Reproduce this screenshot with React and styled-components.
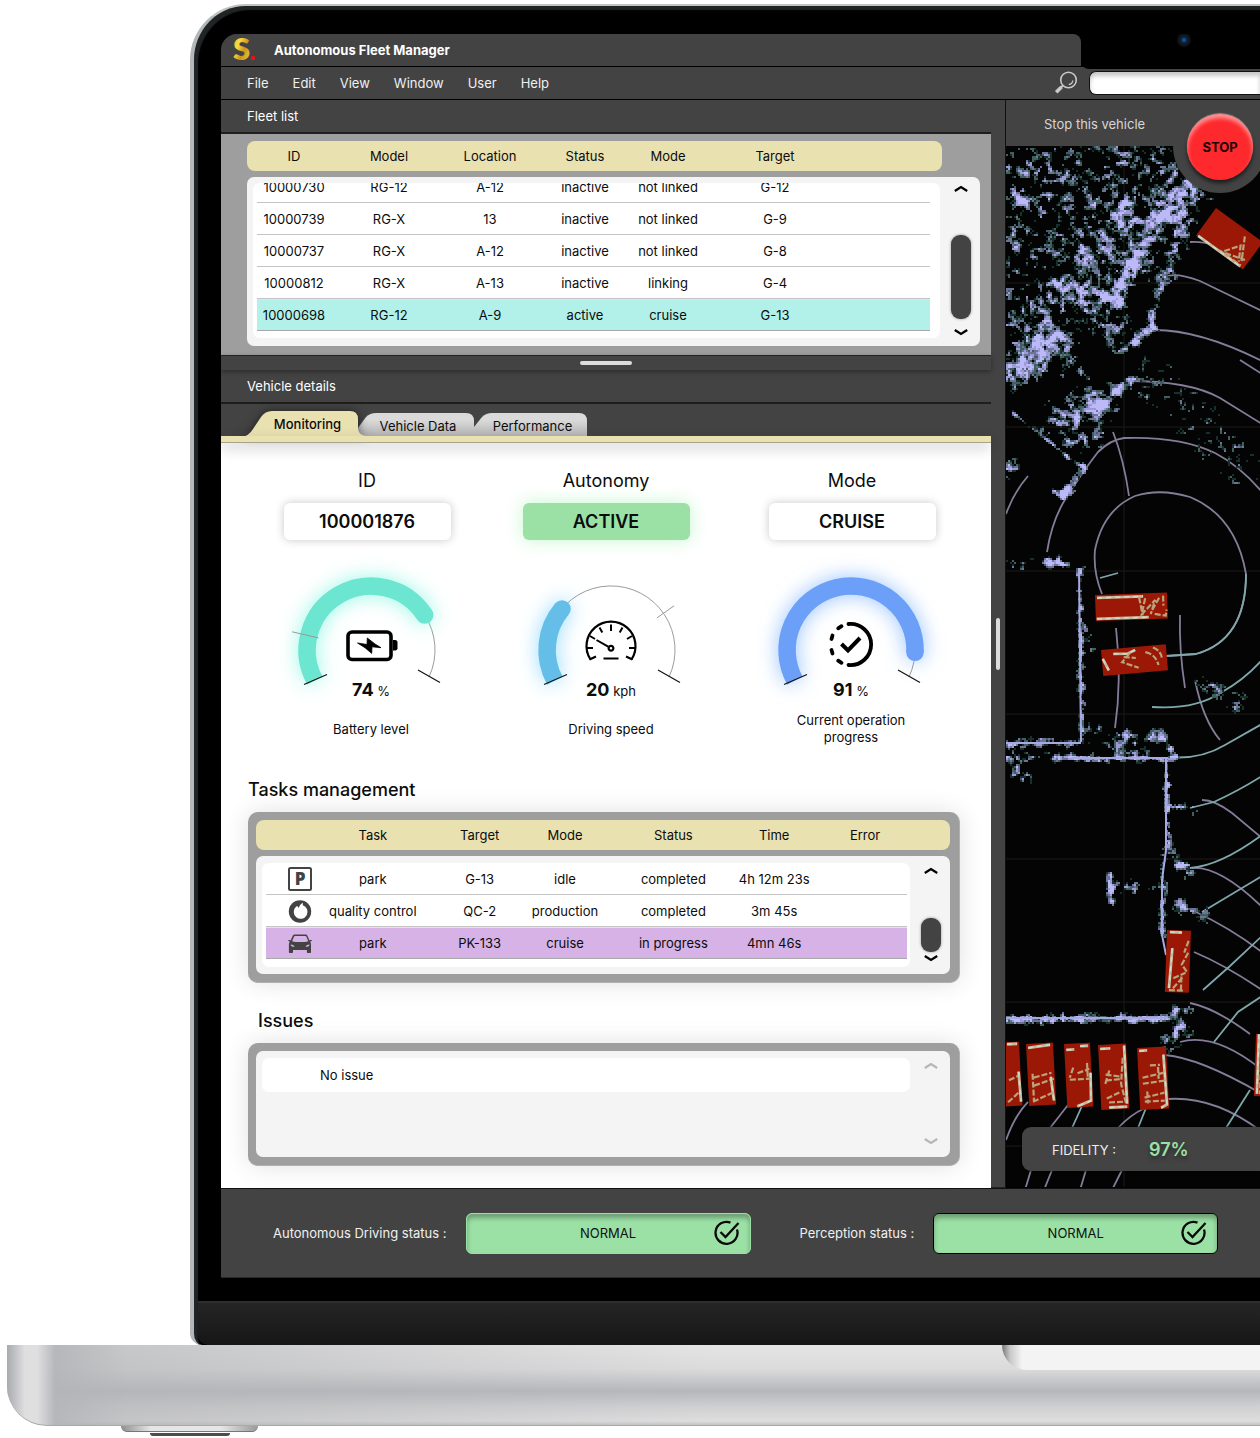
import React from "react";
import styled, { createGlobalStyle, css } from "styled-components";

const color = {
  chrome: "#434343",
  panel: "#9e9e9e",
  sand: "#e9e1b0",
  well: "#f4f4f4",
  green: "#9be1a5",
};

const GlobalStyle = createGlobalStyle`
  * { box-sizing: border-box; }
  body {
    margin: 0;
    background: #fff;
    color: #0c0c0c;
    font: 400 13px/16px Inter, "Liberation Sans", sans-serif;
    overflow-x: hidden;
  }
  button, input { font: inherit; color: inherit; padding: 0; border: 0; background: none; }
  h1, h2, p { margin: 0; font: inherit; }
`;

/* ---------- laptop ---------- */

const Laptop = styled.div`
  padding-top: 4px;
  overflow: hidden;
`;

const Lid = styled.div`
  margin-left: 190px;
  padding: 28px 0 0 27px;
  background: #000;
  border-left: 4px solid #b4b7ba;
  border-top: 2px solid #bfc4c1;
  border-radius: 56px 0 0 12px;
  box-shadow: inset 4px 4px 1px #212424;
`;

const Screen = styled.div`
  border-top-left-radius: 16px;
  overflow: hidden;
  background: ${color.chrome};
`;

const Chin = styled.div`
  height: 44px;
  margin: 23px 0 0 -23px;
  background: linear-gradient(#252525, #161616);
  border-top: 2px solid #2e2e2e;
  border-bottom-left-radius: 10px;
`;

const Base = styled.div`
  display: flex;
  justify-content: flex-end;
  height: 81px;
  margin-left: 7px;
  border-bottom-left-radius: 40px;
  border-bottom: 1px solid #a9a9ab;
  background:
    linear-gradient(90deg, #a9aaad 0, #dfdfe0 18px, #dfdfe0 30px, rgba(180, 181, 184, 0.95) 48px, rgba(180, 181, 184, 0.6) 120px, transparent 700px),
    linear-gradient(#e4e4e4 0, #dbdbdc 24px, #b6b7ba 46px, #d0d0d2 62px, #dedede 76px, #bcbcbe 81px);
`;

const ThumbNotch = styled.div`
  width: 258px;
  height: 25px;
  border-bottom-left-radius: 26px;
  background: linear-gradient(90deg, #777 0, #c8c8c8 8px, #f3f3f3 20px);
`;

const Foot = styled.div`
  width: 137px;
  height: 6px;
  margin-left: 121px;
  border-radius: 0 0 6px 6px;
  background: linear-gradient(90deg, #8f8f8f, #e6e6e6 30px, #e6e6e6 100px, #999);
  border-bottom: 1px solid #777;
`;

const FootPad = styled.div`
  width: 80px;
  height: 3px;
  margin: 1px 0 0 150px;
  border-radius: 0 0 40px 40px;
  background: #4a4d4a;
`;

/* ---------- window chrome ---------- */

const TitleBar = styled.header`
  display: flex;
  height: 33px;
  background: #000;
`;

const TitleArea = styled.div`
  flex: 1;
  display: flex;
  align-items: center;
  gap: 15px;
  padding-left: 11px;
  background: ${color.chrome};
  border-bottom: 1px solid #000;
  border-top-right-radius: 8px;
`;

const AppTitle = styled.h1`
  font-weight: 700;
  color: #fff;
`;

const CameraNotch = styled.div`
  position: relative;
  width: 179px;
  height: 35px;
  background: #000;
  border-bottom-left-radius: 8px;
  display: flex;
  justify-content: center;
`;

const Camera = styled.span`
  width: 14px;
  height: 14px;
  margin: -1px 0 0 26px;
  border-radius: 50%;
  background: radial-gradient(circle, #1c63a8 0, #0a2344 3px, #101418 5px, #0f1112 7px);
`;

const MenuBar = styled.div`
  display: flex;
  align-items: center;
  height: 33px;
  padding-left: 26px;
  border-bottom: 1px solid #000;
  color: #f0f0f0;
`;

const Menu = styled.nav`
  display: flex;
  flex: 1;
  gap: 24px;
`;

const MenuButton = styled.button`
  cursor: pointer;
`;

const Search = styled.label`
  display: flex;
  align-items: center;
  gap: 11px;
  width: 206px;
`;

const SearchInput = styled.input`
  flex: 1;
  min-width: 0;
  height: 24px;
  padding: 0 8px;
  color: #111;
  background: #fff;
  border: 1px solid #111;
  border-right: 0;
  border-radius: 7px 0 0 7px;
  box-shadow: inset 0 4px 4px rgba(0, 0, 0, 0.22);
`;

const Workspace = styled.main`
  display: grid;
  grid-template-columns: minmax(0, 770fr) 15px minmax(0, 254fr);
`;

const LeftPane = styled.div`
  background: #fff;
`;

const SectionBar = styled.h2`
  display: flex;
  align-items: center;
  height: 34px;
  padding-left: 26px;
  background: ${color.chrome};
  color: #fff;
  border-bottom: 2px solid #1e1e1e;
`;

const RowSplitter = styled.div`
  display: flex;
  align-items: center;
  justify-content: center;
  height: 15px;
  background: ${color.chrome};
  border-top: 1px solid #222;
  box-shadow: 0 2px 5px rgba(0, 0, 0, 0.35);
  position: relative;
`;

const ColumnSplitter = styled.div`
  display: flex;
  align-items: center;
  justify-content: center;
  background: ${color.chrome};
  border-right: 1px solid #111;
  border-bottom: 1px solid #222;
`;

const Grip = styled.span`
  width: ${(p) => (p.$vertical ? 4 : 52)}px;
  height: ${(p) => (p.$vertical ? 52 : 4)}px;
  border-radius: 2px;
  background: #dcdcdc;
`;

/* ---------- tables ---------- */

const FleetArea = styled.section`
  padding: 7px 11px 9px 26px;
  background: ${color.panel};
`;

const Panel = styled.section`
  margin-top: 10px;
  padding: 8px 9px 8px 8px;
  border: 1px solid #b0b0b0;
  border-width: 0 1px 1px 0;
  border-radius: 10px;
  background: ${color.panel};
  box-shadow: 0 0 24px rgba(0, 0, 0, 0.12);
`;

const TableFrame = styled.div`
  display: grid;
  grid-template-columns: minmax(0, 1fr) 38px;
  grid-template-rows: ${(p) => (p.$headless ? "auto" : "30px auto")};
  row-gap: 6px;
`;

const Table = styled.table`
  display: contents;
`;

const Head = styled.thead`
  display: block;
  grid-row: 1;
  grid-column: ${(p) => (p.$wide ? "1 / 3" : "1")};
  padding: 0 ${(p) => (p.$wide ? 43 : 12)}px 0 10px;
  border-radius: 8px;
  background: ${color.sand};
`;

const Well = styled.div`
  grid-row: ${(p) => (p.$headless ? 1 : 2)};
  grid-column: 1 / 3;
  border-radius: 7px;
  background: ${color.well};
`;

const Body = styled.tbody`
  display: block;
  grid-row: 2;
  grid-column: 1;
  margin: ${(p) => (p.$wide ? "7px 2px 7px 6px" : "6px 2px 8px 6px")};
  padding: ${(p) => (p.$wide ? "0 3px 8px 4px" : "0 10px 7px 4px")};
  overflow: hidden;
  border-radius: 7px;
  background: #fff;
`;

const Row = styled.tr`
  display: grid;
  grid-template-columns: ${(p) => p.$cols.map((c) => `minmax(0, ${c}fr)`).join(" ")};
  height: ${(p) => (p.$head ? 30 : 32)}px;
  ${(p) =>
    !p.$head &&
    css`
      border-bottom: 1px solid #c4c4c4;
    `}
  ${(p) =>
    p.$scrolled &&
    css`
      margin-top: -12px;
    `}
  ${(p) =>
    p.$tint &&
    css`
      background: ${p.$tint};
      background-clip: padding-box;
      border-top: 1px solid #e4e4e4;
      border-bottom-color: #a8a8a8;
    `}
`;

const cell = css`
  display: flex;
  align-items: center;
  justify-content: center;
  padding: 0;
  font-weight: 400;
  white-space: nowrap;
`;
const Th = styled.th`
  ${cell}
`;
const Td = styled.td`
  ${cell}
`;
const IconTd = styled.td`
  ${cell}
  justify-content: flex-start;
  padding-left: 22px;
  svg {
    flex: none;
  }
`;

const ScrollColumn = styled.div`
  grid-row: ${(p) => (p.$headless ? 1 : 2)};
  grid-column: 2;
  display: flex;
  flex-direction: column;
  align-items: center;
  padding: ${(p) => (p.$inset ? "11px 0 12px" : "8px 0 10px")};
`;

const ScrollButton = styled.button`
  display: flex;
  cursor: pointer;
  color: #000;
  &:disabled {
    color: #b7b7b7;
    cursor: default;
  }
`;

const Track = styled.div`
  flex: 1;
  display: flex;
  align-items: flex-end;
  padding-bottom: ${(p) => (p.$tight ? 3 : 10)}px;
`;

const Thumb = styled.div`
  width: 20px;
  height: ${(p) => p.$size}px;
  border-radius: 9px;
  background: ${color.chrome};
  box-shadow: 0 0 3px rgba(0, 0, 0, 0.4);
`;

/* ---------- tabs ---------- */

const TabList = styled.div`
  display: flex;
  align-items: flex-end;
  height: 32px;
  padding-left: 20px;
  background: ${color.chrome};
`;

const TabButton = styled.button`
  position: relative;
  display: flex;
  justify-content: center;
  width: ${(p) => p.$w}px;
  height: ${(p) => (p.$active ? 25 : 23)}px;
  padding: ${(p) => (p.$active ? "5px 0 0 16px" : "5px 0 0 4px")};
  z-index: ${(p) => (p.$active ? 2 : 1)};
  font-weight: ${(p) => (p.$active ? 500 : 400)};
  cursor: pointer;
  span {
    position: relative;
  }
`;

const TabShape = styled.svg`
  position: absolute;
  left: 0;
  top: 0;
  overflow: visible;
  filter: ${(p) => (p.$active ? "drop-shadow(0 0 5px rgba(0,0,0,.5))" : "none")};
`;

const TabRail = styled.div`
  position: relative;
  z-index: 3;
  height: 7px;
  background: ${color.sand};
  border-bottom: 1px solid #a5a28f;
  box-shadow: 0 5px 14px rgba(0, 0, 0, 0.22);
`;

/* ---------- monitoring ---------- */

const Monitoring = styled.div`
  padding: 26px 31px 22px 27px;
`;

const Fields = styled.div`
  display: grid;
  grid-template-columns: minmax(0, 238fr) minmax(0, 240fr) minmax(0, 252fr);
  margin-right: -18px;
`;

const Field = styled.div`
  display: flex;
  flex-direction: column;
  align-items: center;
  gap: 10px;
  font-size: 18px;
  line-height: 24px;
`;

const FieldValue = styled.output`
  width: 167px;
  line-height: 37px;
  text-align: center;
  font-weight: 600;
  border-radius: 6px;
  background: ${(p) => (p.$on ? color.green : "#fff")};
  box-shadow: ${(p) => (p.$on ? "0 0 18px rgba(150,240,165,.55)" : "0 0 10px rgba(0,0,0,.22)")};
`;

const Gauges = styled.div`
  display: grid;
  grid-template-columns: repeat(3, minmax(0, 1fr));
  margin: 30px -11px 0 3px;
`;

const GaugeCard = styled.figure`
  margin: 0;
  display: flex;
  flex-direction: column;
  align-items: center;
`;

const GaugeSvg = styled.svg`
  overflow: visible;
  .band {
    filter: drop-shadow(0 0 10px ${(p) => p.$glow});
  }
`;

const Reading = styled.p`
  line-height: 20px;
  b {
    font-size: 18px;
    font-weight: 700;
  }
`;

const Caption = styled.figcaption`
  display: flex;
  align-items: center;
  width: 130px;
  min-height: 34px;
  margin-top: 11px;
  justify-content: center;
  text-align: center;
  line-height: 17px;
`;

const Heading = styled.h2`
  margin-top: ${(p) => (p.$sub ? 26 : 32)}px;
  padding-left: ${(p) => (p.$sub ? 10 : 0)}px;
  font-size: 18px;
  line-height: 24px;
  font-weight: 500;
`;

const IssueList = styled.ul`
  grid-row: 1;
  grid-column: 1;
  list-style: none;
  min-height: 92px;
  margin: 7px 2px 7px 6px;
  padding: 0;
`;

const Issue = styled.li`
  padding: 9px 0 9px 58px;
  border-radius: 7px;
  background: #fff;
`;

/* ---------- lidar view ---------- */

const LidarPane = styled.section`
  position: relative;
  display: flex;
  flex-direction: column;
  overflow: hidden;
  background: #040404;
  border-bottom: 1px solid #000;
`;

const LidarMap = styled.svg`
  position: absolute;
  inset: 0;
  width: 100%;
  height: 100%;
`;

const StopBar = styled.div`
  position: relative;
  display: flex;
  align-items: center;
  height: 46px;
  padding: 2px 0 0 38px;
  background: ${color.chrome};
  color: #d6d6d6;
`;

const StopHalo = styled.div`
  position: absolute;
  top: 0;
  left: 167px;
  width: 94px;
  height: 93px;
  padding: 14px;
  border-radius: 0 0 47px 47px;
  background: ${color.chrome};
`;

const StopButton = styled.button`
  width: 66px;
  height: 66px;
  border-radius: 50%;
  background: #fe292c;
  color: #190404;
  font-weight: 700;
  cursor: pointer;
  box-shadow: inset 0 4px 4px rgba(255, 255, 255, 0.5), 0 -1px 1px #8f8f8f, 0 3px 4px rgba(0, 0, 0, 0.6);
`;

const Fidelity = styled.div`
  position: relative;
  display: flex;
  align-items: center;
  gap: 33px;
  height: 44px;
  margin: auto 0 16px 16px;
  padding: 2px 0 0 30px;
  border-radius: 9px 0 0 9px;
  background: ${color.chrome};
  color: #eee;
  box-shadow: 0 0 3px #000;
  b {
    font-size: 18px;
    font-weight: 600;
    color: ${color.green};
    text-shadow: 0 3px 4px rgba(0, 0, 0, 0.4);
  }
`;

/* ---------- status bar ---------- */

const StatusBar = styled.footer`
  display: flex;
  align-items: center;
  gap: 49px;
  height: 90px;
  padding-left: 52px;
  border-top: 1px solid #111;
  border-bottom: 1px solid #2a2a2a;
  color: #f0f0f0;
  overflow: hidden;
`;

const StatusItem = styled.div`
  display: flex;
  align-items: center;
  gap: 19px;
  white-space: nowrap;
`;

const StatusBadge = styled.output`
  display: grid;
  grid-template-columns: 36px 1fr 36px;
  align-items: center;
  text-align: center;
  width: 285px;
  height: 41px;
  border: 1px solid ${(p) => (p.$outlined ? "#000" : color.green)};
  border-radius: 6px;
  background: ${color.green};
  color: #111;
  box-shadow: inset 0 4px 5px rgba(0, 0, 0, 0.3);
  span {
    grid-column: 2;
  }
`;

/* ---------- icons ---------- */

const Logo = () => (
  <svg width="27" height="32" viewBox="0 0 27 32" overflow="visible" role="img" aria-label="S.">
    <defs>
      <linearGradient id="gold" x1="0" y1="0" x2="1" y2="1">
        <stop offset="0" stopColor="#e0a81c" />
        <stop offset=".35" stopColor="#fbd93f" />
        <stop offset=".6" stopColor="#c9951b" />
        <stop offset="1" stopColor="#fbe04c" />
      </linearGradient>
    </defs>
    <text x="1" y="26" fontFamily="Lato, sans-serif" fontWeight="800" fontSize="31" fill="url(#gold)">S</text>
    <rect x="19" y="22" width="4" height="4" rx="1" fill="#e81212" />
  </svg>
);

const Magnifier = () => (
  <svg width="24" height="24" viewBox="0 0 24 24" fill="none" stroke="#c9c9c9" aria-hidden="true">
    <circle cx="14.500" cy="9" r="7.800" strokeWidth="1.600" />
    <path d="M18.800 9.500a4.500 4.500 0 0 1-4 4" strokeWidth="1.300" />
    <path d="M9 14.500l-2 2" strokeWidth="2" />
    <path d="M7.500 16l-5.300 5.300" strokeWidth="3.600" />
  </svg>
);

const Chevron = ({ down }) => (
  <svg width="14" height="7" viewBox="0 0 14 7" fill="none" stroke="currentColor" strokeWidth="2.300" aria-hidden="true">
    <path d={down ? "M.8 1l6.200 4 6.200-4" : "M.8 6L7 2l6.200 4"} />
  </svg>
);

const ParkIcon = () => (
  <svg width="24" height="24" viewBox="0 0 24 24" aria-hidden="true">
    <rect x="1" y="1" width="22" height="22" rx="1.500" fill="none" stroke="#434343" strokeWidth="2" />
    <text x="12" y="18" textAnchor="middle" fontFamily="Open Sans, sans-serif" fontWeight="800" fontSize="17" fill="#434343">P</text>
  </svg>
);

const QualityIcon = () => (
  <svg width="24" height="24" viewBox="0 0 24 24" aria-hidden="true">
    <circle cx="12" cy="12.500" r="11.200" fill="#434343" />
    <path d="M12.500 5.500l2.300-1.700v2.400a6.900 7 0 1 1-6.600 1.300l1.200-.6 1 2z" fill="#fff" />
  </svg>
);

const CarIcon = () => (
  <svg width="24" height="24" viewBox="0 0 24 24" fill="#434343" aria-hidden="true">
    <path
      fillRule="evenodd"
      d="M7 3.500h10.500c.9 0 1.500.5 1.900 1.300l2 4.400 2.100-.2c.6 0 .7.900.1 1.100l-1.500.6c.7.800.9 1.600.9 2.600v7.500c0 .8-.3 1.200-1 1.200h-2c-.8 0-1.100-.4-1.100-1.200v-1.800H5v1.800c0 .8-.4 1.200-1.100 1.200H2c-.7 0-1.100-.4-1.100-1.200v-7.500c0-1 .3-1.800 1-2.600L.5 10.100c-.6-.2-.5-1.100.1-1.100l2.100.2 2-4.400C5.300 4 6 3.500 7 3.500zM7 5c-.5 0-.8.2-1 .7l-1.900 4.500c4.500 1.200 11.800 1.200 16.200 0l-1.900-4.500c-.2-.5-.5-.7-1-.7zM2.600 13.500c.2 1.600 1.300 2.300 3.900 2.300 0-1.200-1.700-2-3.900-2.300zm19 0c-2.200.3-3.900 1.100-3.900 2.300 2.500 0 3.700-.7 3.900-2.300z"
    />
  </svg>
);

const CheckCircle = () => (
  <svg width="26" height="26" viewBox="0 0 26 26" fill="none" stroke="#0a0a0a" strokeWidth="2.300" aria-hidden="true">
    <path d="M16.500 2.600A11 11 0 1 0 23 9.500" />
    <path d="M6.500 12l5 5L24.500 3" />
  </svg>
);

const BatteryIcon = () => (
  <g>
    <rect x="-23" y="-18" width="43" height="27.500" rx="4" fill="none" stroke="#000" strokeWidth="3.600" />
    <path d="M22 -10h2.500q2 .5 2 2v6.500q0 1.500-2 2H22z" fill="#000" />
    <path d="M-13.500 -7L-4 -5.500-3.700 -12 4 -6 10 -2.300 1 -3.200.7 3.400-6 -2.300z" fill="#000" stroke="#000" strokeWidth=".8" />
  </g>
);

const SpeedIcon = () => (
  <g fill="none" stroke="#000" strokeWidth="2.200">
    <path d="M-20.500 10.500A24.500 24.500 0 1 1 20.500 10.500" transform="translate(0 -1)" />
    <path d="M-21.500 9.600l6.500-3M21.500 9.600l-6.500-3" />
    <path d="M0 -25.500v6.500M-24 -2h6M24 -2h-6M-21 -14l5 3M21 -14l-5 3M-11.500 -22.500l2.800 5M11.500 -22.500l-2.800 5M-14.500 -10L-2.800 -3.300M-7.500 8.500h15" strokeWidth="2" />
    <circle cx="0" cy="-1.800" r="2.400" />
  </g>
);

const ProgressIcon = () => (
  <g fill="none" stroke="#000" strokeWidth="3.800" strokeLinecap="round" transform="translate(0 -5.500)">
    <path d="M-2.500 -20.500A20.600 20.600 0 1 1 -2.500 20.500" />
    <path d="M-9.500 -18.300l-3.300 2.100M-18.500 -9l-1 3.500M-19.500 5.500l1 3.500M-12.800 16.200l3.300 2.100" />
    <path d="M-9.500 -.5l6.500 6.500L9 -6.500" strokeLinecap="butt" strokeWidth="4" />
  </g>
);

/* ---------- gauge ---------- */

const R = 64;
const at = (deg, r = R) => {
  const a = (deg * Math.PI) / 180;
  return `${(r * Math.cos(a)).toFixed(1)} ${(r * Math.sin(a)).toFixed(1)}`;
};
const START = 151.5;
const END = 385;

function Gauge({ tone, glow, end, tick, value, unit, label, children }) {
  const arc = (from, to) => `M${at(from)}A${R} ${R} 0 ${to - from > 180 ? 1 : 0} 1 ${at(to)}`;
  return (
    <GaugeCard>
      <GaugeSvg width="240" height="110" viewBox="-120 -80 240 110" fill="none" $glow={glow} aria-hidden="true">
        <path d={arc(START, END)} stroke="#9b9b9b" strokeWidth="1" />
        <g className="band">
          <path d={arc(START, end)} stroke={tone} strokeWidth="17.500" />
          <circle cx={at(end).split(" ")[0]} cy={at(end).split(" ")[1]} r="8.750" fill={tone} />
        </g>
        {tick && <path d={`M${at(tick[0], tick[1])}L${at(tick[0], tick[2])}`} stroke="#999" strokeWidth="1" />}
        <path d="M-67 34.500l23-10M47 20l22 12.500" stroke="#111" strokeWidth="1.200" />
        {children}
      </GaugeSvg>
      <Reading>
        <b>{value}</b> {unit}
      </Reading>
      <Caption>{label}</Caption>
    </GaugeCard>
  );
}

/* ---------- lidar drawing ---------- */

// [x1, y1, x2, y2, spread, strength]
const CLOUDS = [
  [1195, 180, 1165, 205, 14, 0.8],
  [1170, 200, 1130, 265, 13, 0.95],
  [1125, 205, 1125, 225, 13, 0.8],
  [1130, 265, 1108, 300, 8, 0.85],
  [1055, 283, 1120, 298, 7, 0.9],
  [1100, 250, 1060, 300, 18, 0.5],
  [1040, 300, 1050, 345, 13, 0.6],
  [1085, 305, 1115, 330, 12, 0.6],
  [1060, 340, 1030, 352, 11, 0.9],
  [1010, 365, 1050, 345, 14, 0.7],
  [1120, 350, 1155, 325, 4, 0.8],
  [1165, 270, 1150, 325, 5, 0.5],
  [1190, 200, 1165, 270, 9, 0.5],
  [1130, 155, 1190, 180, 18, 0.42],
  [1010, 165, 1110, 165, 24, 0.3],
  [1010, 195, 1110, 215, 28, 0.3],
  [1020, 250, 1090, 250, 24, 0.32],
  [1010, 300, 1020, 340, 14, 0.35],
  [1018, 196, 1024, 200, 7, 0.7],
  [1010, 240, 1014, 242, 6, 0.7],
  [1060, 418, 1095, 408, 13, 0.8],
  [1085, 400, 1100, 395, 9, 0.95],
  [1100, 405, 1130, 378, 5, 0.85],
  [1070, 440, 1095, 435, 9, 0.55],
  [1070, 365, 1078, 370, 9, 0.4],
  [1010, 376, 1035, 364, 9, 0.75],
  [1083, 466, 1062, 494, 4, 1.3],
  [1052, 490, 1062, 497, 2, 0.7],
  [1012, 412, 1080, 466, 2, 0.7],
  [1006, 470, 1014, 464, 6, 0.6],
  [1008, 560, 1032, 563, 4, 0.6],
  [1046, 562, 1056, 560, 5, 0.9],
  [1058, 562, 1080, 570, 3, 0.5],
  [1079, 568, 1081, 742, 3, 0.75],
  [1006, 743, 1082, 742, 4, 0.7],
  [1085, 728, 1098, 729, 4, 0.6],
  [1122, 736, 1160, 734, 6, 0.65],
  [1160, 735, 1174, 755, 5, 0.8],
  [1115, 745, 1140, 750, 9, 0.4],
  [1060, 757, 1170, 758, 3, 0.9],
  [1006, 758, 1060, 758, 4, 0.55],
  [1012, 765, 1022, 775, 7, 0.5],
  [1166, 758, 1167, 850, 3, 0.75],
  [1170, 805, 1190, 808, 4, 0.5],
  [1165, 850, 1188, 872, 5, 0.8],
  [1162, 860, 1162, 935, 3, 0.6],
  [1110, 874, 1110, 900, 3, 0.9],
  [1112, 886, 1145, 885, 6, 0.6],
  [1180, 905, 1203, 914, 5, 0.8],
  [1006, 1018, 1168, 1018, 4, 1],
  [1168, 1020, 1176, 1008, 4, 0.9],
  [1185, 1012, 1188, 1018, 5, 0.7],
  [1170, 1040, 1180, 1030, 8, 0.75],
  [1150, 380, 1240, 460, 26, 0.1],
  [1205, 682, 1235, 700, 9, 0.25],
  [1086, 625, 1090, 650, 4, 0.3],
];

const LEVELS = [
  [0.86, "#bcb9f8"],
  [0.7, "#9d9ad8"],
  [0.57, "#6c7396"],
  [0.46, "#3f5f60"],
  [0.37, "#16302c"],
];

function hash(x, y) {
  let h = (x * 374761393 + y * 668265263) | 0;
  h = Math.imul(h ^ (h >>> 13), 1274126177);
  return ((h ^ (h >>> 16)) >>> 0) / 4294967296;
}

function smooth(x, y) {
  const ix = Math.floor(x);
  const iy = Math.floor(y);
  const fx = x - ix;
  const fy = y - iy;
  const top = hash(ix, iy) * (1 - fx) + hash(ix + 1, iy) * fx;
  const low = hash(ix, iy + 1) * (1 - fx) + hash(ix + 1, iy + 1) * fx;
  return top * (1 - fy) + low * fy;
}

function density(x, y) {
  let free = 1;
  for (const [x1, y1, x2, y2, spread, strength] of CLOUDS) {
    const vx = x2 - x1;
    const vy = y2 - y1;
    const t = Math.max(0, Math.min(1, ((x - x1) * vx + (y - y1) * vy) / (vx * vx + vy * vy)));
    const d2 = (x - x1 - vx * t) ** 2 + (y - y1 - vy * t) ** 2;
    if (d2 < spread * spread * 5) free *= 1 - Math.min(0.98, strength * Math.exp(-d2 / (spread * spread)));
  }
  return 1 - free;
}

function buildPoints() {
  const paths = LEVELS.map(() => "");
  for (let y = 146; y < 1060; y += 2) {
    for (let x = 1006; x < 1260; x += 2) {
      const d = density(x, y);
      if (d < 0.04) continue;
      const n = 0.75 * smooth(x / 4.5, y / 4.5) + 0.25 * hash(x + 9000, y);
      const v = d * 0.85 + (n - 0.5) * 1.5;
      const level = LEVELS.findIndex(([min]) => v > min);
      if (level >= 0) paths[level] += `M${x} ${y}h2v2h-2z`;
    }
  }
  return paths;
}

const POINTS = buildPoints();

const SWEEPS = [
  "M1102 594Q1093 572 1095 550Q1103 510 1135 496Q1160 488 1190 497Q1236 516 1246 574Q1246 640 1196 654L1166 656",
  "M1047 552Q1052 520 1066 498Q1084 470 1098 452Q1110 440 1124 438Q1180 436 1215 453Q1240 466 1262 492",
  "M1128 381Q1190 381 1220 398L1262 424",
  "M1155 330Q1200 330 1262 361",
  "M1165 277Q1175 272 1200 281L1262 311",
  "M1190 242Q1210 240 1238 256",
  "M1240 360L1262 374",
  "M1006 514Q1014 492 1028 476",
  "M1113 432Q1124 460 1129 496",
  "M1116 628Q1122 680 1115 728",
  "M1180 615Q1179 650 1185 688",
  "M1195 680Q1203 720 1220 740",
  "M1202 800Q1215 800 1232 813L1262 838",
  "M1192 868Q1220 866 1262 907",
  "M1196 912Q1230 928 1262 952",
  "M1194 952Q1225 965 1262 990",
  "M1190 1003Q1215 1008 1250 1034",
  "M1180 1042Q1215 1032 1262 1070",
  "M1165 1055Q1200 1058 1262 1094",
  "M1168 1099Q1215 1096 1262 1132",
  "M1006 1140Q1015 1115 1028 1102",
  "M1050 1128L1068 1105",
  "M1118 1128Q1130 1115 1145 1108",
  "M1025 1190l6-20M1044 1190l8-20M1080 1190l6-20M1112 1190l10-20",
];
const ECHOES = [
  "M1246 574Q1246 640 1196 654L1166 656",
  "M1152 707Q1195 710 1222 692Q1244 680 1262 660",
  "M1168 757Q1200 760 1225 745L1262 724",
  "M1190 808L1214 802Q1240 790 1262 776",
  "M1190 868Q1220 866 1262 835",
  "M1202 912L1262 876",
  "M1203 990L1230 966L1262 936",
  "M1214 1042L1238 1012L1262 996",
  "M1226 1128L1250 1090M1072 1128l10-22M1138 1128l8-20",
  "M1100 578l18-5",
];

const CARS = [
  { x: 1095, y: 595, w: 72, h: 26, a: -2, marks: "M2 3h46M1 24h52", glints: "M44 4l3 18M50 5l-4 16 14-14-5 14M64 5l-8 13M59 21l11 2 1-6M68 3v10" },
  { x: 1101, y: 650, w: 65, h: 26, a: -5, marks: "M1 9l5 12M12 5l14 1 8-3", glints: "M28 6l-8 8 16 7M22 9l12 2M44 6q10 3 12 14M52 2q8 4 8 12" },
  { x: 1216, y: 208, w: 58, h: 34, a: 36, marks: "M2 33h52", glints: "M32 30l10-14 8 14M40 6l12 22M34 31l20-6M28 32h26" },
  { x: 1167, y: 930, w: 24, h: 62, a: 2, marks: "M6 18l-2 40M3 2h12", glints: "M22 10l-4 12M22 22l-6 12 6 8M8 48l12-6M8 58l10-12M16 60V44M4 60h14" },
  { x: 993, y: 1043, w: 26, h: 64, a: -3, marks: "M24 30l1 30M14 2h10", glints: "M14 38l10-4M12 60l12-10" },
  { x: 1026, y: 1044, w: 27, h: 62, a: -3, marks: "M2 4l22-2M23 34l2 24", glints: "M6 34l18-4M6 42l20-6M4 58l20-8M5 30v28" },
  { x: 1064, y: 1044, w: 26, h: 64, a: -3, marks: "M25 30l-1 28-14 5M2 6h8M16 3h8", glints: "M4 36h20M8 24l-4 10M22 20v14M12 30l12-4" },
  { x: 1098, y: 1045, w: 28, h: 65, a: -3, marks: "M26 2v58M2 4h10M8 63h18", glints: "M6 30l16 3M6 36l16-1M6 54l14-6M24 14l-3 26 4 20M10 26l-5 14M8 58h14" },
  { x: 1137, y: 1048, w: 29, h: 62, a: -3, marks: "M26 8l1 50-6 3M2 3h8", glints: "M4 30l22-4M4 36l22-2M5 50l20-4M5 54h20M12 18h10M20 20v12M8 44v12" },
  { x: 1256, y: 1034, w: 26, h: 62, a: 2, marks: "M3 0v60", glints: "M6 0v60" },
];

function LidarDrawing() {
  return (
    <LidarMap viewBox="1006 100 254 1089" preserveAspectRatio="xMinYMin slice" fill="none" role="img" aria-label="Lidar view">
      <path d="M1124 100v1089M1006 283h254M1006 427h254M1006 571h254M1006 714h254M1006 859h254M1006 1002h254M1006 1146h254" stroke="#1d1a18" />
      <g stroke="#857c98" strokeWidth="1.800">
        {SWEEPS.map((d) => (
          <path key={d} d={d} />
        ))}
      </g>
      <g stroke="#7fa8ac" strokeWidth="1.800">
        {ECHOES.map((d) => (
          <path key={d} d={d} />
        ))}
      </g>
      {POINTS.map((d, i) => (
        <path key={LEVELS[i][1]} d={d} fill={LEVELS[i][1]} />
      ))}
      <g stroke="#aaa8e2" strokeWidth="2">
        <path d="M1079 568l2 174M1006 743h75M1072 758h96M1166 758v92l-4 30v55l4 20M1006 1018h162" />
      </g>
      {CARS.map((c) => (
        <g key={`${c.x}-${c.y}`} transform={`translate(${c.x} ${c.y}) rotate(${c.a})`}>
          <rect width={c.w} height={c.h} fill="#9c1806" />
          <path d={c.marks} stroke="#c9b79a" strokeWidth="2.800" />
          <path d={c.glints} stroke="#b9a37c" strokeWidth="2.200" strokeDasharray="6 2" />
          <path d={c.marks} stroke="#c4e0cf" strokeWidth="1.500" strokeDasharray="5 4" />
        </g>
      ))}
    </LidarMap>
  );
}

/* ---------- data ---------- */

const FLEET_COLS = [74, 116, 86, 104, 62, 152, 79];
const FLEET_HEAD = ["ID", "Model", "Location", "Status", "Mode", "Target"];
const FLEET = [
  ["10000730", "RG-12", "A-12", "inactive", "not linked", "G-12"],
  ["10000739", "RG-X", "13", "inactive", "not linked", "G-9"],
  ["10000737", "RG-X", "A-12", "inactive", "not linked", "G-8"],
  ["10000812", "RG-X", "A-13", "inactive", "linking", "G-4"],
  ["10000698", "RG-12", "A-9", "active", "cruise", "G-13"],
];

const TASK_COLS = [29, 156, 58, 113, 104, 98, 84];
const TASK_HEAD = ["Task", "Target", "Mode", "Status", "Time", "Error"];
const TASKS = [
  [ParkIcon, "park", "G-13", "idle", "completed", "4h 12m 23s"],
  [QualityIcon, "quality control", "QC-2", "production", "completed", "3m 45s"],
  [CarIcon, "park", "PK-133", "cruise", "in progress", "4mn 46s"],
];

const MENUS = ["File", "Edit", "View", "Window", "User", "Help"];

function Scroller({ thumb, inset, headless, tight }) {
  return (
    <ScrollColumn $inset={inset} $headless={headless}>
      <ScrollButton aria-label="Scroll up" disabled={!thumb}>
        <Chevron />
      </ScrollButton>
      <Track $tight={tight}>{thumb ? <Thumb $size={thumb} /> : null}</Track>
      <ScrollButton aria-label="Scroll down" disabled={!thumb}>
        <Chevron down />
      </ScrollButton>
    </ScrollColumn>
  );
}

function FleetTable() {
  return (
    <FleetArea>
      <TableFrame>
        <Well />
        <Table>
          <Head>
            <Row $head $cols={FLEET_COLS}>
              {FLEET_HEAD.map((h) => (
                <Th key={h} scope="col">{h}</Th>
              ))}
            </Row>
          </Head>
          <Body>
            {FLEET.map((row, i) => (
              <Row key={row[0]} $cols={FLEET_COLS} $scrolled={i === 0} $tint={i === 4 ? "#b1f1e9" : undefined}>
                {row.map((v, j) => (
                  <Td key={j}>{v}</Td>
                ))}
              </Row>
            ))}
          </Body>
        </Table>
        <Scroller thumb={84} />
      </TableFrame>
    </FleetArea>
  );
}

function TaskTable() {
  return (
    <Panel>
      <TableFrame>
        <Well />
        <Table>
          <Head $wide>
            <Row $head $cols={TASK_COLS}>
              <Td />
              {TASK_HEAD.map((h) => (
                <Th key={h} scope="col">{h}</Th>
              ))}
            </Row>
          </Head>
          <Body $wide>
            {TASKS.map(([Icon, ...row], i) => (
              <Row key={i} $cols={TASK_COLS} $tint={i === 2 ? "#d6b2e6" : undefined}>
                <IconTd>
                  <Icon />
                </IconTd>
                {row.map((v, j) => (
                  <Td key={j}>{v}</Td>
                ))}
                <Td />
              </Row>
            ))}
          </Body>
        </Table>
        <Scroller thumb={34} inset tight />
      </TableFrame>
    </Panel>
  );
}

function Tabs() {
  return (
    <TabList role="tablist">
      <TabButton role="tab" aria-selected="true" $active $w={117}>
        <TabShape $active width="126" height="26" viewBox="0 0 126 26" aria-hidden="true">
          <path d="M0 26Q8 25 12 18L20 6Q24 0 31 0H109Q117 0 117 8V18Q118 25 126 25V26z" fill={color.sand} />
        </TabShape>
        <span>Monitoring</span>
      </TabButton>
      <TabButton role="tab" aria-selected="false" $w={116}>
        <TabShape width="116" height="23" viewBox="0 0 116 23" aria-hidden="true">
          <defs>
            <linearGradient id="tab" x1="0" y1="0" x2="0" y2="1">
              <stop offset=".3" stopColor="#dadada" />
              <stop offset="1" stopColor="#b4b4b4" />
            </linearGradient>
          </defs>
          <path d="M0 23V15L8 4Q12 0 18 0H108Q116 0 116 8V23z" fill="url(#tab)" />
        </TabShape>
        <span>Vehicle Data</span>
      </TabButton>
      <TabButton role="tab" aria-selected="false" $w={113}>
        <TabShape width="113" height="23" viewBox="0 0 113 23" aria-hidden="true">
          <path d="M0 23V14L8 4Q12 0 18 0H105Q113 0 113 8V23z" fill="url(#tab)" />
        </TabShape>
        <span>Performance</span>
      </TabButton>
    </TabList>
  );
}

export default function App() {
  return (
    <>
      <GlobalStyle />
      <Laptop>
        <Lid>
          <Screen>
            <TitleBar>
              <TitleArea>
                <Logo />
                <AppTitle>Autonomous Fleet Manager</AppTitle>
              </TitleArea>
              <CameraNotch>
                <Camera />
              </CameraNotch>
            </TitleBar>
            <MenuBar>
              <Menu>
                {MENUS.map((m) => (
                  <MenuButton key={m}>{m}</MenuButton>
                ))}
              </Menu>
              <Search>
                <Magnifier />
                <SearchInput type="search" aria-label="Search" />
              </Search>
            </MenuBar>
            <Workspace>
              <LeftPane>
                <SectionBar>Fleet list</SectionBar>
                <FleetTable />
                <RowSplitter>
                  <Grip />
                </RowSplitter>
                <SectionBar>Vehicle details</SectionBar>
                <Tabs />
                <TabRail />
                <Monitoring>
                  <Fields>
                    <Field>
                      <span>ID</span>
                      <FieldValue>100001876</FieldValue>
                    </Field>
                    <Field>
                      <span>Autonomy</span>
                      <FieldValue $on>ACTIVE</FieldValue>
                    </Field>
                    <Field>
                      <span>Mode</span>
                      <FieldValue>CRUISE</FieldValue>
                    </Field>
                  </Fields>
                  <Gauges>
                    <Gauge tone="#6de6d1" glow="rgba(90,245,215,.65)" end={327} tick={[193, 54, 81]} value="74" unit="%" label="Battery level">
                      <BatteryIcon />
                    </Gauge>
                    <Gauge tone="#64bee8" glow="rgba(90,200,255,.65)" end={220} tick={[325, 56, 77]} value="20" unit="kph" label="Driving speed">
                      <SpeedIcon />
                    </Gauge>
                    <Gauge tone="#6c9ff7" glow="rgba(90,160,255,.65)" end={362} value="91" unit="%" label="Current operation progress">
                      <ProgressIcon />
                    </Gauge>
                  </Gauges>
                  <Heading>Tasks management</Heading>
                  <TaskTable />
                  <Heading $sub>Issues</Heading>
                  <Panel>
                    <TableFrame $headless>
                      <Well $headless />
                      <IssueList>
                        <Issue>No issue</Issue>
                      </IssueList>
                      <Scroller inset headless />
                    </TableFrame>
                  </Panel>
                </Monitoring>
              </LeftPane>
              <ColumnSplitter>
                <Grip $vertical />
              </ColumnSplitter>
              <LidarPane>
                <LidarDrawing />
                <StopBar>
                  Stop this vehicle
                  <StopHalo>
                    <StopButton>STOP</StopButton>
                  </StopHalo>
                </StopBar>
                <Fidelity>
                  <span>FIDELITY :</span>
                  <b>97%</b>
                </Fidelity>
              </LidarPane>
            </Workspace>
            <StatusBar>
              <StatusItem>
                Autonomous Driving status :
                <StatusBadge>
                  <span>NORMAL</span>
                  <CheckCircle />
                </StatusBadge>
              </StatusItem>
              <StatusItem>
                Perception status :
                <StatusBadge $outlined>
                  <span>NORMAL</span>
                  <CheckCircle />
                </StatusBadge>
              </StatusItem>
            </StatusBar>
          </Screen>
          <Chin />
        </Lid>
        <Base>
          <ThumbNotch />
        </Base>
        <Foot />
        <FootPad />
      </Laptop>
    </>
  );
}
